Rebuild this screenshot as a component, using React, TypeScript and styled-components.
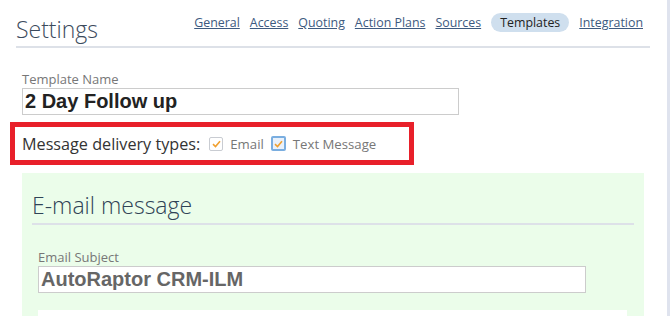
import styled, { createGlobalStyle } from 'styled-components'

const GlobalStyle = createGlobalStyle`
  html, body {
    margin: 0;
    padding: 0;
    background: #ffffff;
    overflow: hidden;
  }
  body {
    font-family: "Open Sans", "Liberation Sans", sans-serif;
    color: #333;
  }
`

const Page = styled.div`
  position: relative;
  width: 670px;
  height: 316px;
  overflow: hidden;
`

const ScrollEdge = styled.div`
  position: absolute;
  top: 0;
  right: 0;
  width: 3px;
  height: 100%;
  background: #dfe3ee;
`

const Header = styled.div`
  display: flex;
  align-items: flex-end;
  justify-content: space-between;
  height: 48px;
  box-sizing: border-box;
  margin: 0 20px 0 16px;
  padding: 0 7px 0 0;
  border-bottom: 2px solid #dde1e8;
`

const Title = styled.h1`
  margin: 0;
  font-size: 23px;
  font-weight: 300;
  color: #3b4a5c;
  line-height: 34px;
`

const Nav = styled.nav`
  display: flex;
  align-items: center;
  gap: 10px;
  align-self: flex-start;
  margin-top: 13px;
`

const NavLink = styled.a<{ $active?: boolean }>`
  font-size: 12.4px;
  line-height: 19px;
  color: ${p => (p.$active ? '#222' : '#3d5a80')};
  text-decoration: ${p => (p.$active ? 'none' : 'underline')};
  background: ${p => (p.$active ? '#cfdfee' : 'transparent')};
  padding: ${p => (p.$active ? '0 9px' : '0')};
  border-radius: 10px;
  cursor: pointer;
`

const Form = styled.div`
  padding: 23px 0 0 22px;
`

const Label = styled.div`
  font-size: 13px;
  color: #777;
  line-height: 17px;
`

const TextInput = styled.div<{ $width: number; $muted?: boolean }>`
  width: ${p => p.$width}px;
  height: 27px;
  box-sizing: border-box;
  border: 1px solid #ccc;
  background: #fff;
  padding: 0 2px;
  font-family: "Liberation Sans", Arial, sans-serif;
  font-weight: bold;
  font-size: 20px;
  line-height: 25px;
  color: ${p => (p.$muted ? '#666' : '#222')};
`

const DeliveryRow = styled.div`
  display: flex;
  align-items: center;
  width: 404px;
  height: 43px;
  box-sizing: border-box;
  margin: 7px 0 0 -12px;
  padding: 0 7px;
  border: 5px solid #e8202a;
  font-size: 16.2px;
  color: #333;
`

const RowLabel = styled.span`
  margin-right: 9px;
`

const Check = styled.span<{ $focused?: boolean }>`
  display: inline-flex;
  align-items: center;
  justify-content: center;
  width: ${p => (p.$focused ? 11 : 12)}px;
  height: ${p => (p.$focused ? 11 : 12)}px;
  border: ${p => (p.$focused ? '2px solid #7aaee0' : '1px solid #c9ccd2')};
  border-radius: 2px;
  background: ${p => (p.$focused ? '#e9f1fb' : '#fff')};
  margin-right: 7px;
`

const CheckText = styled.span`
  font-size: 13.2px;
  color: #777;
  margin-right: 7px;
`

const Panel = styled.div`
  margin: 8px 26px 0 0;
  padding: 15px 10px 0 11px;
  background: #ebfdea;
  height: 200px;
`

const PanelTitle = styled.h2`
  margin: 0 0 0 -1px;
  font-size: 23px;
  font-weight: 300;
  color: #2f4356;
  line-height: 34px;
  padding-bottom: 1px;
  border-bottom: 2px solid #dde1e8;
`

const PanelBody = styled.div`
  padding: 24px 0 0 5px;
`

const WhiteBox = styled.div`
  margin-top: 17px;
  width: 589px;
  height: 40px;
  background: #fff;
`

function CheckMark() {
  return (
    <svg width="9" height="8" viewBox="0 0 9 8">
      <path d="M1 4.2 L3.5 6.5 L8 1.3" fill="none" stroke="#f0a030" strokeWidth="1.6" />
    </svg>
  )
}

const links = ['General', 'Access', 'Quoting', 'Action Plans', 'Sources', 'Templates', 'Integration']

export default function App() {
  return (
    <Page>
      <GlobalStyle />
      <Header>
        <Title>Settings</Title>
        <Nav>
          {links.map(l => (
            <NavLink key={l} $active={l === 'Templates'}>{l}</NavLink>
          ))}
        </Nav>
      </Header>
      <Form>
        <Label>Template Name</Label>
        <TextInput $width={437}>2 Day Follow up</TextInput>
        <DeliveryRow>
          <RowLabel>Message delivery types:</RowLabel>
          <Check><CheckMark /></Check>
          <CheckText>Email</CheckText>
          <Check $focused><CheckMark /></Check>
          <CheckText>Text Message</CheckText>
        </DeliveryRow>
        <Panel>
          <PanelTitle>E-mail message</PanelTitle>
          <PanelBody>
            <Label>Email Subject</Label>
            <TextInput $width={548} $muted>AutoRaptor CRM-ILM</TextInput>
            <WhiteBox />
          </PanelBody>
        </Panel>
      </Form>
      <ScrollEdge />
    </Page>
  )
}
